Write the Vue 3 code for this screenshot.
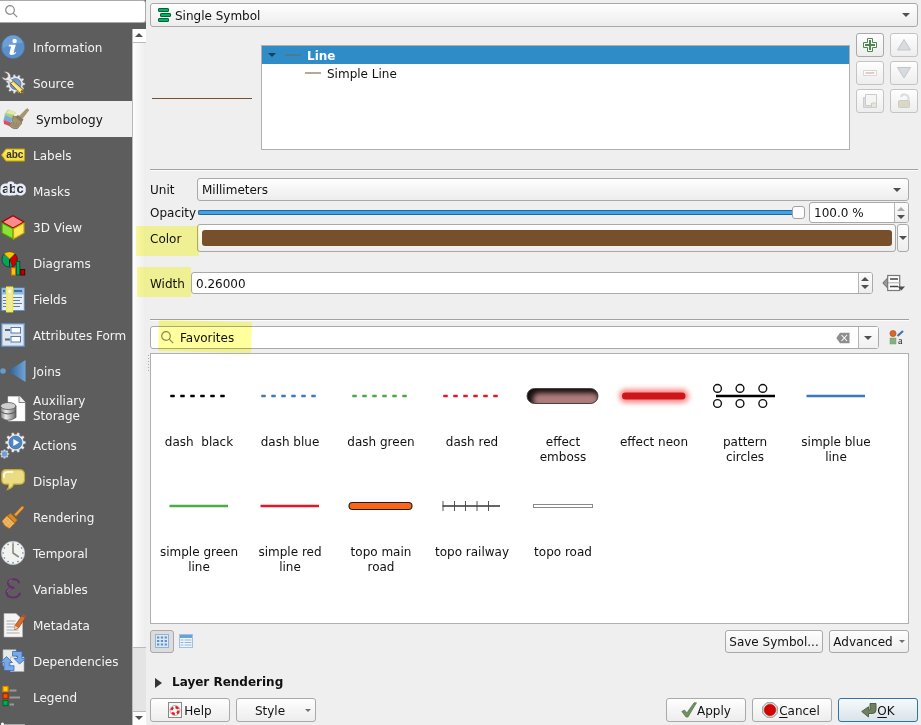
<script setup>
import { ref } from 'vue'

const gear = (cx, cy, r, teeth, fill, stroke = '#777') => {
  let pts = ''
  for (let i = 0; i < teeth; i++) {
    for (const [o, k] of [[-0.3, 0.8], [-0.18, 1], [0.18, 1], [0.3, 0.8]]) {
      const a = ((i + o) / teeth) * Math.PI * 2
      pts += `${(cx + Math.cos(a) * r * k).toFixed(2)},${(cy + Math.sin(a) * r * k).toFixed(2)} `
    }
  }
  return `<polygon points="${pts}" fill="${fill}" stroke="${stroke}" stroke-width=".5"/>`
}

const clockDots = Array.from({ length: 12 }, (_, i) => {
  const a = (i * Math.PI) / 6
  return `<circle cx="${12 + Math.cos(a) * 9.9}" cy="${12 + Math.sin(a) * 9.9}" r=".8" fill="#4a7fc0"/>`
}).join('')

const icons = {
  info: `<circle cx="12" cy="12" r="11.7" fill="#5a8fca" stroke="#3a6ea5" stroke-width=".6"/><path d="M2 13A10 10 0 0 1 22 8Q14 8 2 13" fill="#7eaade" opacity=".6"/>
    <circle cx="13.600" cy="6" r="2.200" fill="#fff"/><path d="M8 9.800h6.800L12.700 17.500q0 1 2-.6l.7.8q-2.600 2.600-5.200 2.300-2.200-.3-1.600-2.600l1.500-5.800H7.700z" fill="#fff"/>`,
  source: gear(14.5, 13, 9.6, 11, '#e8e8e8') + `<circle cx="14.500" cy="13" r="5.500" fill="#6d9fd2" stroke="#447" stroke-width=".5"/>
    <path d="M3 .8Q8 0 9.500 4.500L9.300 7.500 14 12l-2 2-5-4.600Q2.500 10 .8 6L5 7.500 7 5.500 6.500 3z" fill="#eee" stroke="#777" stroke-width=".5"/>
    <path d="M9.500 12.500l3-2.500 9.500 8.500q2 3-.5 4-2 .5-3.500-1z" fill="#f1d36b" stroke="#5d4a16" stroke-width=".8"/><path d="M11 12l9 8" stroke="#fff0a0" stroke-width="1.500"/><circle cx="21" cy="20.500" r="1.200" fill="#6b571c"/>`,
  symbology: `<g transform="translate(2 0)"><path d="M5 2.500l8 3-3.500 6L1 8z" fill="#a5d488"/><path d="M6 3l7 2.500-1.500 2.500L3 6z" fill="#e8e6a8"/><path d="M2 8l8 3.500-3 5L.5 13z" fill="#7fa9d0"/><path d="M.6 13l8 3-1 3.500L1 17z" fill="#dc5064"/>
    <path d="M10 9q2 1 3 .5l5 3.500q-1 2 1 3l-4.500 5.500Q9 22.500 6 18q4-2 4-9z" fill="#a39572" stroke="#776c52" stroke-width=".7"/><path d="M11 15l-1 4M14 15l-2 5M16 16l-2.500 4" stroke="#85795c" stroke-width=".6"/>
    <path d="M12 10l3-2 5.500 4.500-1.800 3z" fill="#887b5c"/><path d="M16 9.500L24 1.500l1.800 1.600-6.500 8.500z" fill="#a8976c" stroke="#7d7153" stroke-width=".5"/></g>`,
  labels: `<path d="M.5 12L5 6h18.500v12H5z" fill="#f6df3f" stroke="#c5a50c"/><path d="M5.500 7H23v4H3z" fill="#fff07a" opacity=".6"/><text x="13.800" y="15.300" text-anchor="middle" font-family="Liberation Sans" font-weight="bold" font-size="10" textLength="17" fill="#333">abc</text>`,
  masks: `<text x="12" y="14" text-anchor="middle" font-family="Liberation Sans" font-weight="bold" font-size="13" textLength="21.500" fill="#333" stroke="#e8edfb" stroke-width="5" stroke-linejoin="round" paint-order="stroke">abc</text>`,
  cube: `<path d="M12 .8L23 7 12 13 1 7z" fill="#fa8a8c" stroke="#a40000" stroke-width="1.300"/><path d="M1 8l11 5.800V24L1 18z" fill="#8ae234" stroke="#4e9a06" stroke-width="1.200"/><path d="M23 8l-10.500 5.800V24L23 18z" fill="#fce94f" stroke="#c4a000" stroke-width="1.200"/>`,
  diagrams: `<circle cx="8.500" cy="8.500" r="7.600" fill="#00a65a" stroke="#333" stroke-width=".9"/><path d="M8.500 8L3 2.600Q8.500-1 14 2.600z" fill="#ffc400" stroke="#7a5a00" stroke-width=".5"/><path d="M8.800 8.500l5.500-5.500q3.500 5 .5 10l-3 3z" fill="#d00000" stroke="#500" stroke-width=".5"/><path d="M8.500 8.500v7" stroke="#024"/>
    <rect x="10.500" y="17" width="4" height="7" fill="#ffc400" stroke="#d97b00"/><rect x="15.300" y="10.500" width="3.500" height="13.500" fill="#00a65a" stroke="#053"/><rect x="19.700" y="18.500" width="4" height="5.500" fill="#b00" stroke="#500"/>`,
  fields: `<rect x=".7" y="1" width="22.600" height="22.500" fill="#e9eef4" stroke="#6090c4"/><rect x="1.200" y="1.500" width="21.600" height="6" fill="#8fb8df"/><path d="M13 4h8M2 4h2" stroke="#3c6fa6" stroke-width="2"/><path d="M2 10.500h3m7 0h9M2 13.500h3m7 0h7M2 16.500h3m7 0h9M2 19.500h3m7 0h7" stroke="#5580b5" stroke-width="1.200"/><rect x="5.700" y=".2" width="5.800" height="24.500" fill="#eeeaa4" stroke="#f8ee38" stroke-width="1.400"/><circle cx="8.600" cy="4.500" r="1.400" fill="#fff"/>`,
  form: `<rect x=".7" y=".7" width="22.600" height="22.600" fill="#dfe6ed" stroke="#5c8ec7" stroke-width="1.300"/><path d="M4 7h5M4 16.500h5" stroke="#526b86" stroke-width="1.800"/><rect x="10" y="4.500" width="9.500" height="5.500" fill="#fff" stroke="#4b7db6"/><rect x="10" y="13.500" width="9.500" height="5.500" fill="#fff" stroke="#4b7db6"/>`,
  joins: `<defs><linearGradient id="jg"><stop stop-color="#2d5c8e"/><stop offset="1" stop-color="#6fa5da"/></linearGradient></defs><path d="M7 12L24.500 1v22z" fill="url(#jg)"/><circle cx="2" cy="12" r="2.800" fill="#679bd0"/>`,
  storage: `<path d="M7 .5h12l5 5.500v19H7z" fill="#fff" stroke="#ddd" stroke-width=".5"/><path d="M18 .5V6.500h6" fill="#eee" stroke="#555" stroke-width=".7"/><defs><linearGradient id="dg"><stop stop-color="#777"/><stop offset=".35" stop-color="#eee"/><stop offset="1" stop-color="#666"/></linearGradient></defs><path d="M-.5 10v11.500q7 5.500 15.500 0V10z" fill="url(#dg)" stroke="#555" stroke-width=".8"/><ellipse cx="7.200" cy="10" rx="7.700" ry="3.500" fill="#cecece" stroke="#555" stroke-width=".8"/><path d="M-.5 15.500q7.500 5 15.500 0" fill="none" stroke="#555"/>`,
  actions: gear(14.5, 9.5, 10.3, 10, '#eee') + `<circle cx="14.500" cy="9.500" r="6.500" fill="#4b86c8" stroke="#335f90" stroke-width=".6"/><path d="M12.300 6l6 3.500-6 3.500z" fill="#fff"/>` + gear(3.5, 21, 4.7, 8, '#ddd') + `<circle cx="3.500" cy="21" r="2.700" fill="#6b9fda"/>`,
  display: `<path d="M5 .7h13.500q5 0 5 5v5q0 4.500-5 4.500h-6Q12 19 6.500 20.500 8.500 18 7.500 15.200H5q-4.300 0-4.300-4.500v-5q0-5 4.300-5z" fill="#eadc84" stroke="#c3a62d" stroke-width="1.200"/><path d="M3 9Q2 3 7 3h5" fill="none" stroke="#fff" stroke-width="1.600"/>`,
  broom: `<path d="M13 9.500l8-8.500q2 0 2 2l-8 8.500z" fill="#eda443" stroke="#a35d0b" stroke-width=".7"/><path d="M9.500 8l7 7-2.500 3-7.500-7.300z" fill="#d88b25" stroke="#96540b" stroke-width=".6"/><path d="M6 10.700l7.800 7.500L8.500 23.500Q3 21.500 1 16z" fill="#f0b765" stroke="#b36b14" stroke-width=".7"/><path d="M5 13l6.500 7M3 15l6 7M8 13.500l-4.500 5M11 16.500l-4.500 5" stroke="#d8963f" stroke-width=".5"/>`,
  clock: `<circle cx="12" cy="12" r="11.700" fill="#f2f2ee" stroke="#bbb" stroke-width=".6"/>${clockDots}<path d="M12 3v9l5.800 4" fill="none" stroke="#888" stroke-width="1.600"/>`,
  epsilon: `<path d="M18 5.500Q17 2.200 12.500 2.300 7 2.600 7 6.300q0 4 6.500 4.400Q5.500 11 5.500 15.800q.3 4.700 6.500 4.700 5.500 0 6.800-4" fill="none" stroke="#633069" stroke-width="2.100" stroke-linecap="round"/><path d="M7.800 5.500Q8 3.500 11 2.800M6.300 15q0-2.500 3.500-3.600" fill="none" stroke="#9a76a0" stroke-width=".7"/>`,
  metadata: `<path d="M3 .5h12l6.500 6V24H3z" fill="#f5f5f5" stroke="#bbb" stroke-width=".6"/><path d="M5.500 8h9M5.500 11h9M5.500 14h8M5.500 17h12M5.500 20h13" stroke="#aaa"/><path d="M14 12.500l6.800-9.800 3.600 2L17.500 15l-4 1.800z" fill="#db6a2d" stroke="#8f3b10" stroke-width=".6"/><path d="M20.800 2.700l1.300-1.600 3.400 2-1.100 1.700z" fill="#9a5c38"/><path d="M13.800 12.800l3.500 2-4 2z" fill="#f0d0a0"/>`,
  deps: `<path d="M2 .7h13v16H2z" fill="#e6ebea" stroke="#aaa" stroke-width=".6"/><path d="M9.500 8h13.500v14.500H9.500z" fill="#eee" stroke="#aaa" stroke-width=".6"/><path d="M11.500 2.500H21v7h3.800L18.500 15 13 9.500h3.500V7h-5z" fill="#78a7ea" stroke="#356fc2" stroke-width=".8"/><path d="M5.500 7.500l6 6H8.300v3.200H13v4.800H3v-8H-.5z" fill="#78a7ea" stroke="#356fc2" stroke-width=".8"/>`,
  legend: `<rect x="2" y="1.500" width="5" height="5" fill="#ffd800" stroke="#df8300" stroke-width="1.200"/><rect x="2" y="8.500" width="5" height="5" fill="#ff4c00" stroke="#a62800" stroke-width="1.200"/><rect x="2" y="15.500" width="5" height="5" fill="#00b050" stroke="#006b31" stroke-width="1.200"/><path d="M8.500 5.500h7M8.500 12.500h10.500M8.500 19.500h4.500" stroke="#999" stroke-width="1.800"/>`,
  server: `<path d="M0 3h24V8H0z" fill="#aaa"/><circle cx="1.500" cy="3" r="1.500" fill="#fff"/>`
}

const pages = [
  ['Information', 'info'], ['Source', 'source'], ['Symbology', 'symbology'], ['Labels', 'labels'],
  ['Masks', 'masks'], ['3D View', 'cube'], ['Diagrams', 'diagrams'], ['Fields', 'fields'],
  ['Attributes Form', 'form'], ['Joins', 'joins'], ['Auxiliary\nStorage', 'storage'], ['Actions', 'actions'],
  ['Display', 'display'], ['Rendering', 'broom'], ['Temporal', 'clock'], ['Variables', 'epsilon'],
  ['Metadata', 'metadata'], ['Dependencies', 'deps'], ['Legend', 'legend'], ['', 'server']
]
const current = ref('Symbology')

const dash = c => `<path d="M10.500 36H66" stroke="${c}" stroke-width="2.400" stroke-dasharray="4 6"/><path d="M10 36H66" stroke="${c}" stroke-width="1.200" stroke-dasharray="5 5"/>`
const line = c => `<path d="M9.500 36H68" stroke="${c}" stroke-width="2.400"/>`
const rings = [11.5, 34, 56.8].map(x => `<circle cx="${x}" cy="28.400" r="3.900"/><circle cx="${x}" cy="43.500" r="3.900"/>`).join('')

const symbols = [
  ['dash  black', dash('#000')],
  ['dash blue', dash('#3f78b8')],
  ['dash green', dash('#4aaa42')],
  ['dash red', dash('#e01828')],
  ['effect\nemboss', `<defs><filter id="soft" x="-20%" y="-60%" width="140%" height="220%"><feGaussianBlur stdDeviation="2.500"/></filter><clipPath id="pill"><rect x="3" y="28.500" width="71" height="15" rx="7.500"/></clipPath></defs>
    <rect x="3" y="28.500" width="71" height="15" rx="7.500" fill="#161010"/><g clip-path="url(#pill)"><rect x="9" y="33" width="66" height="14" rx="6" fill="#ae7c7d" filter="url(#soft)"/></g><rect x="3" y="28.500" width="71" height="15" rx="7.500" fill="none" stroke="#4a3a3a" stroke-width=".9"/>`],
  ['effect neon', `<defs><filter id="glow" x="-20%" y="-150%" width="140%" height="400%"><feGaussianBlur stdDeviation="2.600"/></filter></defs><rect x="4" y="29" width="70" height="14" rx="7" fill="#ff8c8c" filter="url(#glow)"/><rect x="7" y="32.500" width="63.500" height="7" rx="3.500" fill="#cd161b"/>`],
  ['pattern\ncircles', `<g fill="#fff" stroke="#111" stroke-width="1.400">${rings}</g><path d="M10 36H69" stroke="#000" stroke-width="2.300"/>`],
  ['simple blue\nline', line('#3f78b8')],
  ['simple green\nline', line('#4eac46')],
  ['simple red\nline', line('#e01828')],
  ['topo main\nroad', `<rect x="7" y="32.500" width="63" height="7" rx="3.500" fill="#ff6414" stroke="#1d1d1d" stroke-width="1.100"/>`],
  ['topo railway', `<path d="M9.500 36H67" stroke="#333" stroke-width="1.700"/><path d="M10 31v10M21.500 31v10M32.500 31v10M44 31v10M55.500 31v10" stroke="#444" stroke-width=".9"/>`],
  ['topo road', `<rect x="9.500" y="34.500" width="59" height="3" fill="#fff" stroke="#8a8a8a"/>`]
]
</script>

<template>
  <div class="dialog">
    <aside class="sidebar">
      <div class="search">
        <svg width="14" height="14" viewBox="0 0 14 14"><circle cx="5" cy="5" r="4.300" /><path d="M8.200 8.200l4 4" /></svg>
      </div>
      <div class="side-body">
        <nav class="pages">
          <div v-for="[name, icon] in pages" :key="icon" class="page" :class="{ active: name === current, tall: icon === 'storage' }">
            <svg class="page-icon" width="24" height="24" viewBox="0 0 24 24" v-html="icons[icon]"></svg>
            <span>{{ name }}</span>
          </div>
        </nav>
        <div class="scrollbar">
          <div class="sb-btn"><i class="tri up"></i></div>
          <div class="sb-track"></div>
          <div class="sb-thumb"></div>
          <div class="sb-btn bottom"><i class="tri down"></i></div>
        </div>
      </div>
    </aside>

    <main class="content">
      <div class="box combo renderer">
        <svg width="14" height="16" viewBox="0 0 14 16"><g fill="#00b45c" stroke="#07613a" stroke-width="1"><rect x=".5" y="1.500" width="10" height="3" rx=".5" /><rect x="2.500" y="6.500" width="10" height="3" rx=".5" /><rect x=".5" y="11.500" width="10" height="3" rx=".5" /></g></svg>
        <span>Single Symbol</span><i class="tri down"></i>
      </div>

      <section class="symbol">
        <div class="preview"><div class="preview-line"></div></div>
        <div class="tree">
          <div class="tree-row selected"><i class="tri down"></i><i class="sample"></i><b>Line</b></div>
          <div class="tree-row child"><i class="sample"></i><span>Simple Line</span></div>
        </div>
        <div class="tools">
          <div class="box tool"><svg width="16" height="16" viewBox="0 0 16 16"><path d="M5.500 1.500h5v4h4v5h-4v4h-5v-4h-4v-5h4z" fill="#fff" stroke="#4c8a4c" /><path d="M8 3v10M3 8h10" stroke="#4c8a4c" stroke-width="2" /></svg></div>
          <div class="box tool off"><svg width="16" height="16" viewBox="0 0 16 16"><path d="M1.500 5.500h13v5h-13z" fill="#fff" stroke="#e2d2d2" /><path d="M3.500 8h9" stroke="#e2cccc" stroke-width="2" /></svg></div>
          <div class="box tool off"><svg width="16" height="16" viewBox="0 0 16 16"><path d="M1.500 4.500h9v10h-9z" fill="#ddd" stroke="#ccc" /><path d="M3.500 1.500h11v11h-11z" fill="#f5f5f5" stroke="#ccc" /><path d="M9.500 10h5v4.500h-5z" fill="#e8e6dc" stroke="#cfcdc0" /></svg></div>
          <div class="box tool off"><svg width="16" height="16" viewBox="0 0 16 16"><path d="M8 2.500l6.500 10.500h-13z" fill="#d8dcde" stroke="#c2c6c8" /></svg></div>
          <div class="box tool off"><svg width="16" height="16" viewBox="0 0 16 16"><path d="M8 13L1.500 2.500h13z" fill="#d8dcde" stroke="#c2c6c8" /></svg></div>
          <div class="box tool off"><svg width="16" height="16" viewBox="0 0 16 16"><path d="M5 4q1-3 4-2.500Q13 2 12.500 7" fill="none" stroke="#ddd" stroke-width="2.200" /><rect x="2.500" y="7.500" width="11" height="7" rx="1" fill="#d9d6ca" stroke="#cfccc0" /></svg></div>
        </div>
      </section>

      <div class="rule wide"></div>

      <div class="row unit"><label>Unit</label><div class="box combo"><span>Millimeters</span><i class="tri down"></i></div></div>
      <div class="row opacity">
        <label>Opacity</label>
        <div class="slider"><div class="groove"></div><div class="knob"></div></div>
        <div class="box spin"><span>100.0 %</span><div class="steps"><i class="tri up dim"></i><i class="tri down"></i></div></div>
      </div>
      <div class="row color">
        <label>Color</label>
        <div class="box color-btn"><div class="swatch"></div></div>
        <div class="box color-menu"><i class="tri down"></i></div>
      </div>
      <div class="row width">
        <label>Width</label>
        <div class="box spin"><span>0.26000</span><div class="steps"><i class="tri up"></i><i class="tri down"></i></div></div>
        <svg width="24" height="20" viewBox="0 0 24 20"><path d="M6 4.500v11L.8 10z" fill="#999" stroke="#666" /><rect x="5.700" y="2.500" width="12" height="15" fill="#fff" stroke="#777" stroke-width="1.200" /><path d="M8 6h8M8 13.500h8" stroke="#444" stroke-width="1.600" /><path d="M6 9.800h12" stroke="#aaa" /><path d="M15.500 13.500h7.500L19.250 17.500z" fill="#4d4d4d" /></svg>
      </div>

      <div class="rule"></div>

      <div class="row filter">
        <div class="box filter-box">
          <svg class="lens" width="14" height="14" viewBox="0 0 14 14"><circle cx="5" cy="5" r="4.300" /><path d="M8.200 8.200l4 4" /></svg>
          <span>Favorites</span>
          <svg class="clear" width="14" height="12" viewBox="0 0 14 12"><path d="M4 .8h9.500v10.400H4L.3 6z" fill="#8e8e8e" /><path d="M5.500 3l5.500 6M11 3L5.500 9" stroke="#fff" stroke-width="1.100" /></svg>
          <div class="drop"><i class="tri down"></i></div>
        </div>
        <svg class="manager" width="16" height="16" viewBox="0 0 16 16"><circle cx="4" cy="3.500" r="3.100" fill="#d4682f" stroke="#b34d18" stroke-width=".6" /><path d="M8.500 6L14 1" stroke="#4573a7" stroke-width="2.200" /><rect x="1" y="8" width="6" height="6" fill="#82b082" stroke="#6fa070" stroke-width=".5" /><text x="9" y="13.600" font-family="Liberation Serif" font-size="10" fill="#222">a</text></svg>
      </div>

      <div class="gallery">
        <div v-for="[name, art] in symbols" :key="name" class="cell">
          <svg width="78" height="72" viewBox="0 0 78 72" fill="none" v-html="art"></svg>
          <span>{{ name }}</span>
        </div>
      </div>

      <div class="row actions">
        <div class="box view on"><svg width="14" height="14" viewBox="0 0 14 14"><rect x=".5" y=".5" width="13" height="13" fill="#dce9f5" stroke="#8eb4dc" /><path d="M2 3.500h10M2 7h10M2 10.500h10" stroke="#5c90c8" stroke-width="2.200" stroke-dasharray="2.300 1.500" /></svg></div>
        <svg class="view-list" width="14" height="14" viewBox="0 0 14 14"><rect x=".5" y=".5" width="13" height="13" fill="#f0f5fa" stroke="#9bc2e3" /><path d="M1 2.500h12" stroke="#69a3d6" stroke-width="3" /><path d="M1.500 6h3m1 0h7M1.500 8.500h3m1 0h7M1.500 11h3m1 0h7" stroke="#91b4d8" /></svg>
        <div class="box btn save"><span>Save Symbol...</span></div>
        <div class="box btn advanced"><span>Advanced</span><i class="tri down small"></i></div>
      </div>

      <div class="rendering"><i class="fold"></i><b>Layer Rendering</b></div>

      <div class="row footer">
        <div class="box btn"><svg width="14" height="16" viewBox="0 0 14 16"><rect x=".5" y=".5" width="13" height="15" fill="#f6f6f6" stroke="#888" /><circle cx="7" cy="8.500" r="3.500" fill="none" stroke="#fff" stroke-width="3.200" /><circle cx="7" cy="8.500" r="3.500" fill="none" stroke="#d8232a" stroke-width="2.400" stroke-dasharray="3.300 2.200" /><circle cx="7" cy="8.500" r="5" fill="none" stroke="#a55" stroke-width=".5" /></svg><span class="help">Help</span></div>
        <div class="box btn style"><span>Style</span><i class="tri down small"></i></div>
        <div class="gap"></div>
        <div class="box btn"><svg width="16" height="16" viewBox="0 0 16 16"><path d="M.8 9.500l2.700-1.500 2.300 3L13 .8h2.500L7 15H5z" fill="#6e9160" stroke="#56764c" stroke-width=".7" /></svg><span>Apply</span></div>
        <div class="box btn cancel"><svg width="16" height="16" viewBox="0 0 16 16"><path d="M4.800.8h6.400l4 4v6.400l-4 4H4.800l-4-4V4.800z" fill="#eee" stroke="#888" /><circle cx="8" cy="8" r="5.800" fill="#d40000" stroke="#a00" stroke-width=".5" /></svg><span><u>C</u>ancel</span></div>
        <div class="box btn default"><svg width="16" height="16" viewBox="0 0 16 16"><path d="M9 1.500h6v6.500q0 3.500-4 3.500H7.500V15L.7 9.500 7.500 4.800V8H9z" fill="#70815f" stroke="#4b5940" stroke-width=".9" /></svg><span><u>O</u>K</span></div>
      </div>
    </main>

    <div class="splitter"></div>
    <div class="marker m-color"></div>
    <div class="marker m-width"></div>
    <div class="marker m-filter"></div>
  </div>
</template>

<style>
body { background: #efefef; overflow: hidden; }
</style>

<style scoped>
* { box-sizing: border-box; }
.dialog { position: relative; display: flex; width: 921px; height: 725px; overflow: hidden; background: #efefef; color: #111; font: 12px/15px "DejaVu Sans", sans-serif; }
.dialog svg { flex: none; overflow: visible; }
.sidebar { display: flex; flex-direction: column; width: 146px; background: #5d5d5d; }
.search { height: 23px; padding: 4px 0 0 5px; background: #fff; border: 1px solid #aaa; border-left: 0; border-radius: 0 3px 3px 0; }
.search svg, .lens { fill: none; stroke: #8a8a8a; stroke-width: 1.2; }
.side-body { display: flex; flex: 1; min-height: 0; padding-top: 6px; }
.pages { flex: 1; overflow: hidden; color: #f4f4f4; }
.page { display: flex; align-items: center; gap: 8px; height: 36px; padding-left: 1px; white-space: pre; }
.page span { padding-top: 3px; line-height: 15px; }
.page.tall { height: 38px; }
.page.tall span { padding-top: 2px; }
.page.active { gap: 11px; background: #efefef; color: #111; }
.scrollbar { display: flex; flex-direction: column; width: 14px; border-left: 1px solid #bababa; background: linear-gradient(90deg, #fdfdfd, #ededed); }
.sb-btn { display: flex; align-items: center; justify-content: center; height: 14px; padding-right: 1px; padding-bottom: 1px; background: #fdfdfd; border-bottom: 1px solid #bababa; }
.sb-btn.bottom { border-bottom: 0; border-top: 1px solid #bababa; }
.sb-track { flex: 1; }
.sb-thumb { height: 64px; background: #e4e4e4; border-top: 1px solid #bababa; }

.tri { flex: none; width: 0; height: 0; border: 4px solid transparent; }
.tri.down { border-top-color: #505050; border-bottom: 0; }
.tri.up { border-bottom-color: #505050; border-top: 0; }
.tri.dim { border-bottom-color: #aaa; }
.tri.small { border-width: 3px 3px 0; border-top-color: #707070; }

.content { display: flex; flex-direction: column; width: 772px; padding: 3px 0 0 4px; }
.box { border: 1px solid #a9a9a9; border-radius: 3px; background: linear-gradient(#fefefe, #ededed); }
.box > span, .tree-row > span, .tree-row > b { padding-top: 2px; }
.combo { display: flex; align-items: center; justify-content: space-between; padding: 0 7px 0 4px; }
.renderer { height: 24px; justify-content: flex-start; gap: 3px; padding-left: 7px; }
.renderer .tri { margin-left: auto; }
.symbol { display: flex; height: 142px; }
.preview { width: 111px; padding: 71px 0 0 2px; }
.preview-line { width: 100px; height: 1px; background: #7c4f2c; }
.tree { width: 589px; height: 105px; margin-top: 18px; border: 1px solid #b0b0b0; background: #fff; }
.tree-row { display: flex; align-items: center; height: 18px; }
.tree-row.selected { padding-left: 6px; background: #308cc6; color: #fff; }
.tree-row.selected .tri { border-top-color: #173f59; }
.tree-row.selected .sample { margin: 0 6px 0 9px; background: #4f7990; }
.tree-row.child { padding-left: 43px; }
.sample { width: 16px; height: 2px; background: #b9a797; margin-right: 6px; }
.tools { display: grid; grid-template-rows: repeat(3, 24px); grid-template-columns: 28px 28px; grid-auto-flow: column; gap: 4px 6px; padding: 6px 0 0 6px; }
.tool { display: flex; align-items: center; justify-content: center; }
.tool.off { border-color: #c4c4c4; }
.rule { flex: none; width: 759px; height: 2px; background: #fcfcfc; border-top: 1px solid #a2a2a2; }
.rule.wide { width: 768px; }
.row { display: flex; align-items: center; width: 759px; flex: none; }
.row label { flex: none; padding-top: 1px; }
.unit { height: 23px; margin-top: 7px; }
.unit label { width: 47px; }
.unit .combo { flex: 1; height: 23px; }
.opacity { height: 23px; }
.opacity label { width: 48px; }
.slider { display: flex; align-items: center; width: 607px; }
.groove { flex: 1; height: 5px; border: 1px solid #22679a; border-right: 0; border-radius: 2px 0 0 2px; background: #44a2e6; }
.knob { width: 13px; height: 13px; border: 1px solid #a2a2a2; border-radius: 3px; background: #fcfcfc; }
.spin { display: flex; align-items: center; justify-content: space-between; background: #fff; padding-left: 4px; }
.opacity .spin { width: 100px; height: 21px; margin-left: 4px; }
.steps { display: flex; flex-direction: column; align-items: center; justify-content: center; gap: 4px; width: 14px; height: 100%; padding-right: 1px; border-left: 1px solid #b5b5b5; background: linear-gradient(#fdfdfd, #ededed); border-radius: 0 2px 2px 0; }
.color { height: 28px; }
.row.color label { width: 47px; padding-top: 2px; }
.color-btn { width: 699px; height: 28px; padding: 5px 3px 5px 4px; }
.swatch { height: 16px; border-radius: 3px; background: #784f2b; }
.color-menu { display: flex; align-items: center; justify-content: center; width: 12px; height: 28px; margin-left: 1px; }
.width { height: 22px; margin-top: 20px; }
.row.width label { width: 41px; padding-top: 3px; }
.width .spin { width: 682px; height: 22px; margin-right: 9px; }
.width + .rule { margin-top: 25px; }
.filter { height: 23px; margin-top: 5px; }
.filter-box { display: flex; align-items: center; width: 729px; height: 23px; padding-left: 10px; background: #fff; }
.filter-box span { margin-left: 5px; }
.clear { margin-left: auto; }
.drop { display: flex; align-items: center; justify-content: center; width: 20px; height: 100%; margin-left: 8px; padding-right: 2px; border-left: 1px solid #b5b5b5; background: linear-gradient(#fefefe, #f0f0f0); }
.manager { margin-left: 10px; }
.gallery { display: grid; flex: none; grid-template-columns: repeat(8, 91px); grid-auto-rows: 110px; width: 759px; height: 271px; margin-top: 4px; padding: 6px 2.5px; border: 1px solid #b0b0b0; background: #fff; }
.cell { display: flex; flex-direction: column; align-items: center; text-align: center; white-space: pre; }
.cell svg { margin-right: 1px; }
.cell span { margin-top: 3px; }
.actions { height: 23px; margin-top: 6px; }
.view { display: flex; align-items: center; justify-content: center; width: 24px; height: 23px; padding-bottom: 1px; background: #dcdcdc; }
.view-list { margin: 0 0 1px 5px; }
.btn { display: flex; align-items: center; justify-content: center; height: 24px; width: 80px; }
.btn.save { width: 98px; height: 23px; margin: 0 6px 0 auto; }
.btn.advanced { height: 23px; gap: 6px; }
.rendering { display: flex; align-items: center; height: 15px; margin-top: 22px; padding-left: 5px; }
.fold { width: 0; height: 0; margin-right: 10px; border: 5px solid transparent; border-left: 7px solid #353535; border-right: 0; }
.footer { width: 768px; gap: 6px; margin-top: 8px; }
.gap { flex: 1; }
.help { margin-left: 2px; }
.style { gap: 20px; padding-left: 14px; }
.cancel { padding-right: 2px; }
.cancel svg { margin-right: 1px; }
.default { border-color: #2b76a5; background: linear-gradient(#f7fafc, #d9e3ea); }
u { text-decoration: underline; text-underline-offset: 2px; }
.splitter { position: absolute; left: 148px; top: 355px; width: 1px; height: 18px; background: repeating-linear-gradient(#aaa 0 1px, transparent 1px 3px); }
.marker { position: absolute; background: #ffff9e; mix-blend-mode: multiply; }
.m-color { left: 136px; top: 226px; width: 63px; height: 30px; }
.m-width { left: 137px; top: 267px; width: 54px; height: 30px; }
.m-filter { left: 158px; top: 320px; width: 94px; height: 33px; clip-path: polygon(1% 0, 100% 6%, 99% 100%, 0 94%); }
</style>
